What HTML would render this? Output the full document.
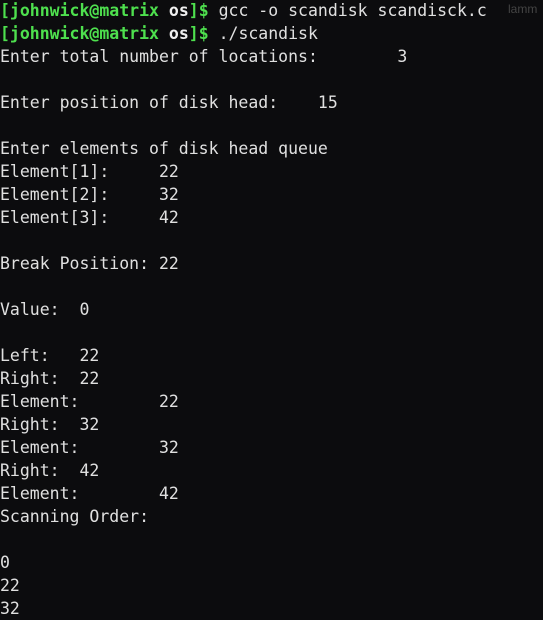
<!DOCTYPE html>
<html><head><meta charset="utf-8"><style>
html,body{margin:0;padding:0;background:#0c0c0e;width:543px;height:614px;overflow:hidden}
pre{margin:0;position:absolute;left:0;top:-1px;font-family:"DejaVu Sans Mono","Liberation Mono",monospace;font-size:16.5px;line-height:23px;color:#e0e0e0;tab-size:8;-moz-tab-size:8;white-space:pre}
.g{color:#4ee04e;font-weight:bold}
.w{color:#f0f0f0;font-weight:bold}
.f{position:absolute;top:2px;left:508px;font-family:"Liberation Sans",sans-serif;font-size:12px;color:#444}
</style></head><body>
<div class="f">lamm</div>
<pre><span class="g">[johnwick@matrix </span><span class="w">os</span><span class="g">]$</span> gcc -o scandisk scandisck.c
<span class="g">[johnwick@matrix </span><span class="w">os</span><span class="g">]$</span> ./scandisk
Enter total number of locations:	3

Enter position of disk head:	15

Enter elements of disk head queue
Element[1]:	22
Element[2]:	32
Element[3]:	42

Break Position: 22

Value:  0

Left:	22
Right:  22
Element:	22
Right:  32
Element:	32
Right:  42
Element:	42
Scanning Order:

0
22
32</pre>
</body></html>
